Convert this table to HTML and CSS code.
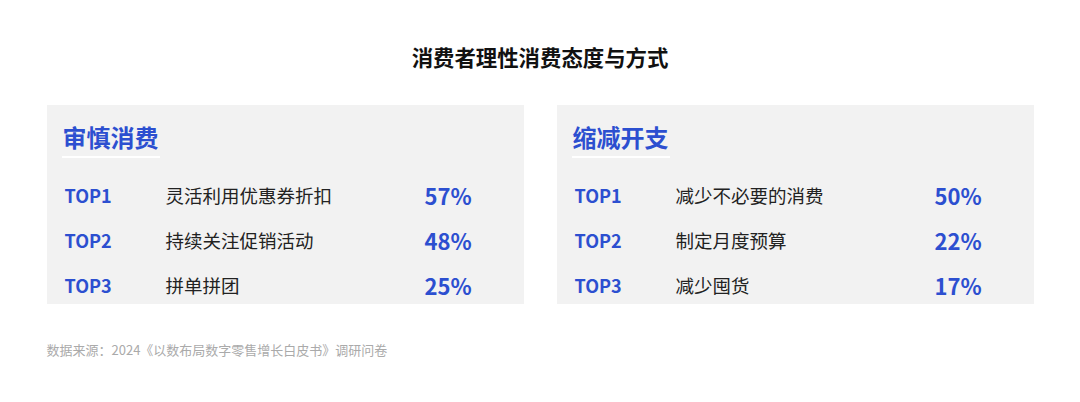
FILE: index.html
```html
<!DOCTYPE html>
<html lang="zh-CN">
<head>
<meta charset="utf-8">
<link rel="stylesheet" href="styles.css">
</head>
<body>
<div class="page">
  <h1 class="title">消费者理性消费态度与方式</h1>
  <div class="panels">
    <section class="panel">
      <h2 class="panel-head"><span class="panel-name">审慎消费</span></h2>
      <div class="rows">
        <div class="row"><span class="rank">TOP1</span><span class="item">灵活利用优惠券折扣</span><span class="pct">57%</span></div>
        <div class="row"><span class="rank">TOP2</span><span class="item">持续关注促销活动</span><span class="pct">48%</span></div>
        <div class="row"><span class="rank">TOP3</span><span class="item">拼单拼团</span><span class="pct">25%</span></div>
      </div>
    </section>
    <section class="panel">
      <h2 class="panel-head"><span class="panel-name">缩减开支</span></h2>
      <div class="rows">
        <div class="row"><span class="rank">TOP1</span><span class="item">减少不必要的消费</span><span class="pct">50%</span></div>
        <div class="row"><span class="rank">TOP2</span><span class="item">制定月度预算</span><span class="pct">22%</span></div>
        <div class="row"><span class="rank">TOP3</span><span class="item">减少囤货</span><span class="pct">17%</span></div>
      </div>
    </section>
  </div>
  <p class="source">数据来源：2024《以数布局数字零售增长白皮书》调研问卷</p>
</div>
</body>
</html>
```
FILE: styles.css
```css
html, body {
  margin: 0;
  padding: 0;
  background: #ffffff;
}
body {
  font-family: "Noto Sans CJK SC", "Noto Sans", sans-serif;
  color: #222222;
}
.page {
  width: 987px;
  margin: 0 auto;
  padding-top: 42px;
}
.title {
  margin: 0;
  text-align: center;
  font-size: 21.4px;
  line-height: 30px;
  font-weight: 700;
  color: #111111;
}
.panels {
  display: flex;
  gap: 33px;
  margin-top: 33px;
}
.panel {
  width: 477px;
  height: 199px;
  box-sizing: border-box;
  background: #f2f2f2;
  padding: 16px 18px 0 18px;
}
.panel-head {
  margin: 0 0 0 -3px;
  font-size: 24px;
  line-height: 32px;
  font-weight: 700;
  color: #2c4fd0;
}
.panel-name {
  display: inline-block;
  padding: 0 1px 3px 1px;
  border-bottom: 2px solid #ffffff;
}
.rows {
  display: flex;
  flex-direction: column;
  gap: 15px;
  margin-top: 21px;
}
.row {
  display: grid;
  grid-template-columns: 101px 259px auto;
  align-items: center;
  height: 30px;
}
.rank {
  font-size: 18px;
  font-weight: 700;
  color: #2c4fd0;
}
.item {
  font-size: 18.5px;
  color: #222222;
}
.pct {
  font-size: 22px;
  font-weight: 700;
  color: #2c4fd0;
}
.source {
  margin: 36px 0 0 0;
  font-size: 13px;
  line-height: 20px;
  color: #aaaaaa;
}
```
